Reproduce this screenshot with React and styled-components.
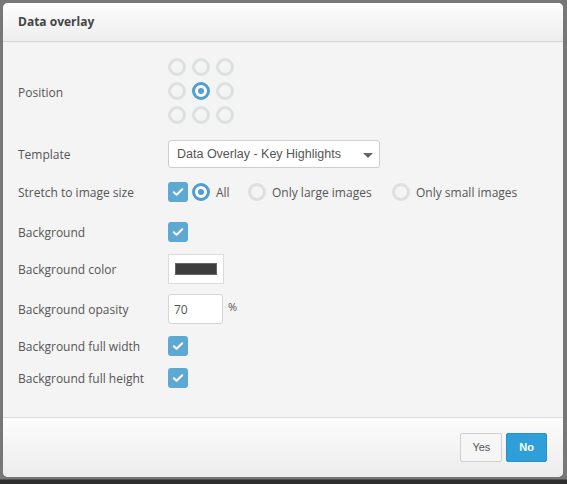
import React from "react";
import styled, { createGlobalStyle } from "styled-components";

const GlobalStyle = createGlobalStyle`
    html, body {
        margin: 0;
        padding: 0;
    }
    body {
        background: linear-gradient(#777 0, #777 479px, #2e2e2e 480px);
        min-height: 484px;
        font-family: "Open Sans", "Liberation Sans", sans-serif;
    }
`;

const Check = () => (
    <svg width="12" height="10" viewBox="0 0 12 10">
        <path d="M1.8 5.2 L4.6 7.8 L10.2 2.2" fill="none" stroke="#fff" strokeWidth="2" strokeLinecap="round" strokeLinejoin="round" />
    </svg>
);

const App = () => {
    const cells = [0, 1, 2, 3, 4, 5, 6, 7, 8];
    return (
        <Page>
            <GlobalStyle />
            <Dialog>
                <Header>Data overlay</Header>
                <Body>
                    <Row $h={86}>
                        <Label>Position</Label>
                        <PositionGrid>
                            {cells.map((c) => (
                                <Radio key={c} $on={c === 4} />
                            ))}
                        </PositionGrid>
                    </Row>
                    <Row $h={38}>
                        <Label>Template</Label>
                        <Select>
                            <span>Data Overlay - Key Highlights</span>
                            <Caret />
                        </Select>
                    </Row>
                    <Row $h={38}>
                        <Label>Stretch to image size</Label>
                        <Options>
                            <CheckBox><Check /></CheckBox>
                            <Option $w={52}>
                                <Radio $on />
                                <span>All</span>
                            </Option>
                            <Option $w={140}>
                                <Radio />
                                <span>Only large images</span>
                            </Option>
                            <Option>
                                <Radio />
                                <span>Only small images</span>
                            </Option>
                        </Options>
                    </Row>
                    <Row $h={42}>
                        <Label>Background</Label>
                        <CheckBox><Check /></CheckBox>
                    </Row>
                    <Row $h={32}>
                        <Label>Background color</Label>
                        <ColorBox>
                            <Swatch />
                        </ColorBox>
                    </Row>
                    <Row $h={48}>
                        <Label>Background opasity</Label>
                        <NumberInput>70</NumberInput>
                        <Unit>%</Unit>
                    </Row>
                    <Row $h={26}>
                        <Label>Background full width</Label>
                        <CheckBox><Check /></CheckBox>
                    </Row>
                    <Row $h={38}>
                        <Label>Background full height</Label>
                        <CheckBox><Check /></CheckBox>
                    </Row>
                </Body>
                <Footer>
                    <Button>Yes</Button>
                    <Button $primary>No</Button>
                </Footer>
            </Dialog>
        </Page>
    );
};

const Page = styled.div`
    padding: 3px 0 0 3px;
`;

const Dialog = styled.div`
    width: 560px;
    height: 474px;
    display: flex;
    flex-direction: column;
    background: #f4f4f4;
    border-radius: 5px;
    overflow: hidden;
    box-sizing: border-box;
`;

const Header = styled.div`
    height: 39px;
    flex-shrink: 0;
    box-sizing: border-box;
    display: flex;
    align-items: center;
    padding: 0 15px 1px;
    background: linear-gradient(#fdfdfd, #eeeeee);
    border-bottom: 1px solid #d2d2d2;
    font-size: 12px;
    font-weight: 700;
    color: #444;
`;

const Body = styled.div`
    flex: 1;
    padding: 7px 0 0 15px;
    border-bottom: 1px solid #dcdcdc;
`;

const Row = styled.div`
    height: ${(p) => p.$h}px;
    display: flex;
    align-items: center;
`;

const Label = styled.div`
    width: 150px;
    flex-shrink: 0;
    font-size: 12px;
    color: #555;
`;

const PositionGrid = styled.div`
    display: grid;
    grid-template-columns: repeat(3, 18px);
    grid-auto-rows: 18px;
    gap: 6px;
    margin-top: -3px;
`;

const Radio = styled.span`
    width: 18px;
    height: 18px;
    box-sizing: border-box;
    border-radius: 50%;
    border: 3px solid ${(p) => (p.$on ? "#4c9fd0" : "#dde0e1")};
    background: ${(p) => (p.$on ? "#fff" : "#f4f4f4")};
    display: flex;
    align-items: center;
    justify-content: center;
    flex-shrink: 0;

    &::after {
        content: "";
        width: 6px;
        height: 6px;
        border-radius: 50%;
        background: ${(p) => (p.$on ? "#4c9fd0" : "transparent")};
    }
`;

const Select = styled.div`
    width: 212px;
    height: 28px;
    box-sizing: border-box;
    background: #fff;
    border: 1px solid #cfcfcf;
    border-radius: 3px;
    display: flex;
    align-items: center;
    justify-content: space-between;
    padding: 0 6px 0 8px;
    font-family: "Liberation Sans", Arial, sans-serif;
    font-size: 12.5px;
    color: #555;
`;

const Caret = styled.span`
    width: 0;
    height: 0;
    border-left: 5px solid transparent;
    border-right: 5px solid transparent;
    border-top: 5px solid #666;
    margin-top: 2px;
`;

const Options = styled.div`
    display: flex;
    align-items: center;
`;

const CheckBox = styled.span`
    width: 20px;
    height: 20px;
    border-radius: 3px;
    background: #5ea8d4;
    display: flex;
    align-items: center;
    justify-content: center;
    flex-shrink: 0;
`;

const Option = styled.label`
    display: flex;
    align-items: center;
    gap: 6px;
    margin-left: 4px;
    width: ${(p) => (p.$w ? `${p.$w}px` : "auto")};
    font-size: 12px;
    color: #555;
`;

const ColorBox = styled.div`
    width: 56px;
    height: 30px;
    box-sizing: border-box;
    background: #fff;
    border: 1px solid #dadada;
    display: flex;
    align-items: center;
    justify-content: center;
`;

const Swatch = styled.span`
    width: 42px;
    height: 12px;
    box-sizing: border-box;
    background: #3d3d3d;
    border: 1px solid #666;
`;

const NumberInput = styled.div`
    width: 55px;
    height: 30px;
    box-sizing: border-box;
    background: #fff;
    border: 1px solid #d5d5d5;
    border-radius: 3px;
    display: flex;
    align-items: center;
    padding-left: 5px;
    font-size: 12px;
    color: #555;
`;

const Unit = styled.span`
    margin-left: 5px;
    margin-top: -6px;
    font-size: 11px;
    color: #555;
`;

const Footer = styled.div`
    height: 58px;
    flex-shrink: 0;
    background: linear-gradient(#fcfcfc, #ececec);
    display: flex;
    align-items: center;
    justify-content: flex-end;
    gap: 4px;
    padding: 0 16px 1px 0;
`;

const Button = styled.button`
    height: 29px;
    padding: 0 ${(p) => (p.$primary ? "12px" : "11px")};
    border-radius: 2px;
    border: 1px solid ${(p) => (p.$primary ? "#2a8fc4" : "#d0d0d0")};
    background: ${(p) => (p.$primary ? "#2e9fd8" : "#f6f6f6")};
    color: ${(p) => (p.$primary ? "#fff" : "#555")};
    font-family: "Liberation Sans", Arial, sans-serif;
    font-size: 11px;
    font-weight: ${(p) => (p.$primary ? 700 : 400)};
`;

export default App;
